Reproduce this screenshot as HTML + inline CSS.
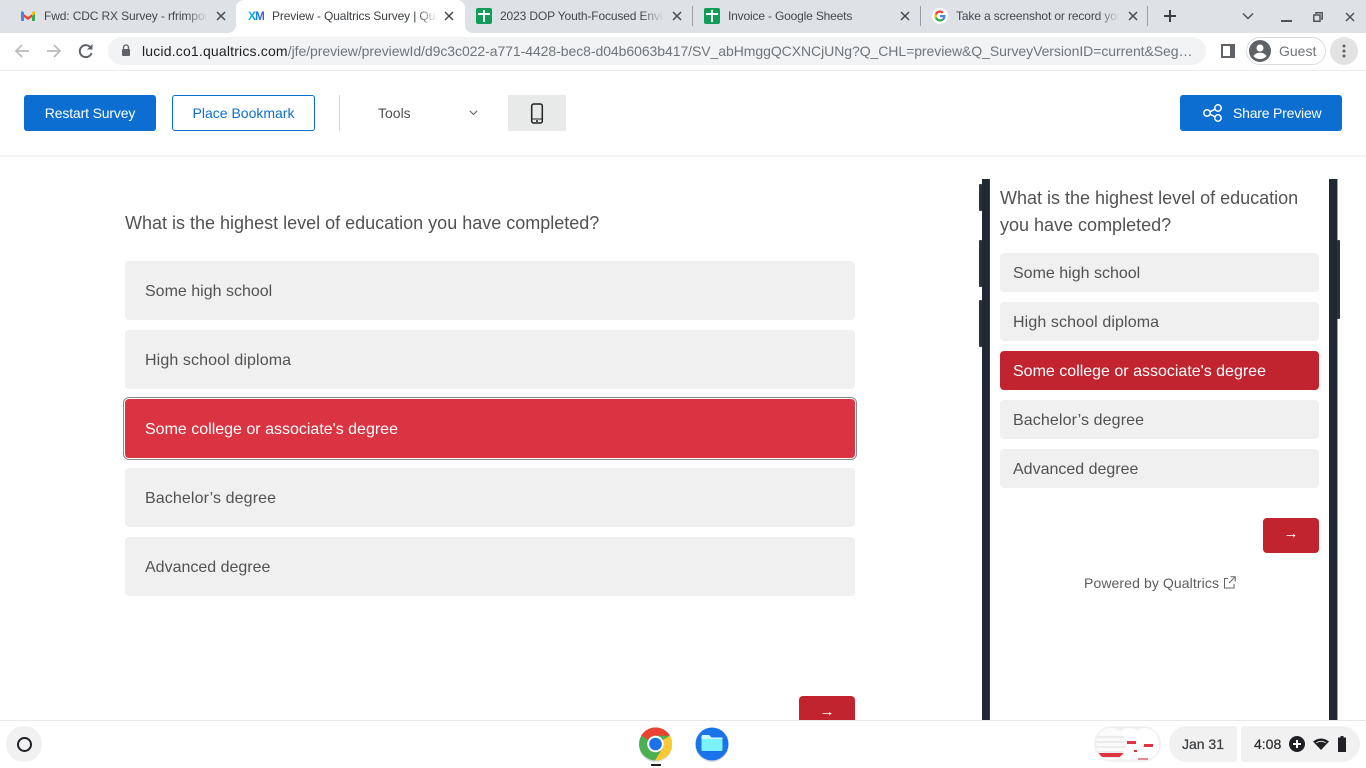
<!DOCTYPE html>
<html><head><meta charset="utf-8"><style>
html,body{margin:0;padding:0}
body{width:1366px;height:768px;overflow:hidden;background:#fff;position:relative;font-family:"Liberation Sans",sans-serif;color:#525252}
div,span,svg{position:absolute;box-sizing:border-box}
.t{white-space:nowrap;overflow:hidden;font-size:12px;line-height:16px;color:#45484c;top:8px;letter-spacing:-.13px}
.fade{top:4px;height:24px;width:22px;background:linear-gradient(90deg,rgba(222,225,230,0),#dee1e6)}
.sep{width:1px;height:20px;top:6px;background:#9a9ea3}
.o{left:125px;width:730px;height:59px;background:#f0f0f0;border-radius:4px;font-size:16px;line-height:61px;padding-left:20px;color:#525252}
.m{left:1000px;width:319px;height:39px;background:#f0f0f0;border-radius:4px;font-size:16px;line-height:41px;padding-left:13px;color:#525252}
.ls{letter-spacing:.11px}
.btn{top:95px;height:36px;border-radius:3px;font-size:14px;line-height:36px;text-align:center}
.fb{background:#2b3139;width:3px;border-radius:1px}
.arr{width:56px;height:35px;background:#c1232f;border-radius:4px;color:#fff;font-size:15px;line-height:32px;text-align:center}
</style></head><body>

<!-- tab strip -->
<div style="left:0;top:0;width:1366px;height:33px;background:#dee1e6"></div>
<div style="left:236px;top:0;width:229px;height:33px;background:#fff;border-radius:8px 8px 0 0"></div>
<div style="left:228px;top:25px;width:8px;height:8px;background:#fff"></div>
<div style="left:228px;top:25px;width:8px;height:8px;background:#dee1e6;border-radius:0 0 8px 0"></div>
<div style="left:465px;top:25px;width:8px;height:8px;background:#fff"></div>
<div style="left:465px;top:25px;width:8px;height:8px;background:#dee1e6;border-radius:0 0 0 8px"></div>

<!-- gmail -->
<svg style="left:21px;top:11px" width="14" height="10" viewBox="0 0 14 10"><path d="M0 1 7 6l7-5v3L7 9 0 4z" fill="#ea4335"/><path d="M0 1.500Q0 0 1.500.3L3 1.500V10H1q-1 0-1-1z" fill="#4285f4"/><path d="M14 1.500V9q0 1-1 1h-2V4z" fill="#34a853"/><path d="M11 1.500 12.500.3Q14 0 14 1.500V2.800L11 5z" fill="#fbbc04"/></svg>
<div class="t" style="left:44px;width:163px">Fwd: CDC RX Survey - rfrimpong</div><div class="fade" style="left:186px"></div>
<svg style="left:216px;top:11px" width="10" height="10" viewBox="0 0 10 10"><path d="M1 1l8 8M9 1l-8 8" stroke="#45484c" stroke-width="1.500"/></svg>

<!-- XM -->
<div style="left:248px;top:9px;font-size:12px;font-weight:bold;line-height:14px;letter-spacing:-1px;color:transparent;background:linear-gradient(90deg,#12c4dc,#0b7ee0 60%,#5a4be0);-webkit-background-clip:text;background-clip:text">XM</div>
<div class="t" style="left:272px;width:164px;color:#3c4043">Preview - Qualtrics Survey | Qualtrics</div>
<div class="fade" style="left:416px;background:linear-gradient(90deg,rgba(255,255,255,0),#fff)"></div>
<svg style="left:444px;top:11px" width="10" height="10" viewBox="0 0 10 10"><path d="M1 1l8 8M9 1l-8 8" stroke="#45484c" stroke-width="1.500"/></svg>

<!-- sheets 1 -->
<div style="left:476px;top:8px;width:16px;height:16px;background:#0f9d58;border-radius:2px"></div>
<div style="left:478px;top:13px;width:12px;height:2px;background:#fff"></div><div style="left:483px;top:10px;width:2px;height:12px;background:#fff"></div>
<div class="t" style="left:500px;width:164px">2023 DOP Youth-Focused Environment</div><div class="fade" style="left:642px"></div>
<svg style="left:672px;top:11px" width="10" height="10" viewBox="0 0 10 10"><path d="M1 1l8 8M9 1l-8 8" stroke="#45484c" stroke-width="1.500"/></svg>
<div class="sep" style="left:692px"></div>

<!-- sheets 2 -->
<div style="left:704px;top:8px;width:16px;height:16px;background:#0f9d58;border-radius:2px"></div>
<div style="left:706px;top:13px;width:12px;height:2px;background:#fff"></div><div style="left:711px;top:10px;width:2px;height:12px;background:#fff"></div>
<div class="t" style="left:728px;width:170px;letter-spacing:-.17px">Invoice - Google Sheets</div>
<svg style="left:900px;top:11px" width="10" height="10" viewBox="0 0 10 10"><path d="M1 1l8 8M9 1l-8 8" stroke="#45484c" stroke-width="1.500"/></svg>
<div class="sep" style="left:920px"></div>

<!-- google -->
<div style="left:932px;top:8px;width:16px;height:16px;background:#fff;border-radius:50%"></div>
<svg style="left:934px;top:10px" width="12" height="12" viewBox="0 0 24 24"><path d="M23 12.300c0-.9-.1-1.600-.2-2.300H12v4.400h6.200c-.3 1.400-1 2.500-2.200 3.300l3.600 2.800c2.100-2 3.400-4.900 3.400-8.200z" fill="#4285f4"/><path d="M12 23c3 0 5.500-1 7.600-2.700L16 17.500c-1 .7-2.300 1.100-4 1.100-3 0-5.500-2-6.400-4.700L1.900 16.700C3.700 20.500 7.500 23 12 23z" fill="#34a853"/><path d="M5.600 14c-.5-1.400-.5-2.700 0-4L1.900 7.200C.4 10.100.4 13.800 1.900 16.700z" fill="#fbbc05"/><path d="M12 5.400c1.700 0 3.200.6 4.300 1.700l3.200-3.200C17.500 2.100 15 1 12 1 7.500 1 3.700 3.500 1.900 7.200L5.600 10C6.500 7.300 9 5.400 12 5.400z" fill="#ea4335"/></svg>
<div class="t" style="left:956px;width:164px">Take a screenshot or record your</div><div class="fade" style="left:1098px"></div>
<svg style="left:1128px;top:11px" width="10" height="10" viewBox="0 0 10 10"><path d="M1 1l8 8M9 1l-8 8" stroke="#45484c" stroke-width="1.500"/></svg>
<div class="sep" style="left:1147px"></div>

<svg style="left:1163px;top:9px" width="14" height="14" viewBox="0 0 14 14"><path d="M7 1v12M1 7h12" stroke="#3c4043" stroke-width="2"/></svg>
<svg style="left:1242px;top:12px" width="12" height="8" viewBox="0 0 12 8"><path d="M1 1.500l5 5 5-5" fill="none" stroke="#50545a" stroke-width="1.500"/></svg>
<div style="left:1281px;top:20px;width:11px;height:2px;background:#50545a"></div>
<svg style="left:1313px;top:12px" width="10" height="10" viewBox="0 0 10 10"><path d="M3 2V.8h6.200V7H8M.8 3h6.200v6.200H.8z" fill="none" stroke="#50545a" stroke-width="1.500"/></svg>
<svg style="left:1345px;top:12px" width="10" height="10" viewBox="0 0 10 10"><path d="M1 1l8 8M9 1l-8 8" stroke="#50545a" stroke-width="1.500"/></svg>

<!-- toolbar -->
<svg style="left:14px;top:43px" width="16" height="16" viewBox="0 0 16 16"><path d="M15 8H2M8 2 2 8l6 6" fill="none" stroke="#b9bbbe" stroke-width="1.700"/></svg>
<svg style="left:46px;top:43px" width="16" height="16" viewBox="0 0 16 16"><path d="M1 8h13M8 2l6 6-6 6" fill="none" stroke="#b9bbbe" stroke-width="1.700"/></svg>
<svg style="left:78px;top:43px" width="16" height="16" viewBox="0 0 16 16"><path d="M13.500 10a6 6 0 1 1-.6-5" fill="none" stroke="#5f6368" stroke-width="2"/><path d="M14.500 1v5.500H9z" fill="#5f6368"/></svg>
<div style="left:108px;top:37px;width:1098px;height:28px;background:#f1f3f4;border-radius:14px"></div>
<svg style="left:121px;top:44px" width="10" height="13" viewBox="0 0 10 13"><path d="M2.500 5V3.500a2.500 2.500 0 0 1 5 0V5" fill="none" stroke="#5f6368" stroke-width="1.300"/><rect x="1" y="5" width="8" height="7" rx="1" fill="#5f6368"/></svg>
<div style="left:142px;top:42px;width:1052px;height:18px;overflow:hidden;white-space:nowrap;font-size:14px;line-height:18px;color:#70757a;letter-spacing:-.06px"><span style="position:static;color:#202124;letter-spacing:.18px">lucid.co1.qualtrics.com</span>/jfe/preview/previewId/d9c3c022-a771-4428-bec8-d04b6063b417/SV_abHmggQCXNCjUNg?Q_CHL=preview&amp;Q_SurveyVersionID=current&amp;Seg…</div>

<svg style="left:1221px;top:44px" width="14" height="14" viewBox="0 0 14 14"><path d="M0 0h14v14H0z" fill="#5f6368"/><path d="M2 2h7v10H2z" fill="#fff"/></svg>
<div style="left:1246px;top:37px;width:80px;height:28px;border:1px solid #dadce0;border-radius:14px"></div>
<svg style="left:1249px;top:40px" width="22" height="22" viewBox="0 0 22 22"><circle cx="11" cy="11" r="11" fill="#5f6368"/><circle cx="11" cy="8" r="3.500" fill="#fff"/><path d="M4.500 16c1.500-2.500 4-3.300 6.500-3.300s5 .8 6.500 3.300c-1.500 2-4 3-6.500 3s-5-1-6.500-3z" fill="#fff"/></svg>
<div style="left:1279px;top:43px;font-size:14px;line-height:16px;color:#70757a">Guest</div>
<div style="left:1330px;top:37px;width:28px;height:28px;background:#e3e3e3;border-radius:50%"></div>
<svg style="left:1342px;top:44px" width="4" height="14" viewBox="0 0 4 14"><circle cx="2" cy="2" r="1.500" fill="#5f6368"/><circle cx="2" cy="7" r="1.500" fill="#5f6368"/><circle cx="2" cy="12" r="1.500" fill="#5f6368"/></svg>
<div style="left:0;top:70px;width:1366px;height:1px;background:#eceded"></div>

<!-- preview header -->
<div class="btn" style="left:24px;width:132px;background:#0b6ed0;color:#fff;letter-spacing:-.15px">Restart Survey</div>
<div class="btn" style="left:172px;width:143px;border:1px solid #0b6ed0;color:#0b6ed0;line-height:34px;background:#fff">Place Bookmark</div>
<div style="left:339px;top:95px;width:1px;height:36px;background:#d4d6d6"></div>
<div style="left:378px;top:105px;font-size:14px;line-height:16px;color:#525252">Tools</div>
<svg style="left:469px;top:110px" width="9" height="6" viewBox="0 0 9 6"><path d="M.8.8 4.500 4.500 8.200.8" fill="none" stroke="#666" stroke-width="1.100"/></svg>
<div style="left:508px;top:95px;width:58px;height:36px;background:#e8e9e9"></div>
<svg style="left:530px;top:103px" width="14" height="21" viewBox="0 0 14 21"><rect x="1.700" y="1" width="10.600" height="19" rx="2" fill="none" stroke="#222" stroke-width="1.500"/><path d="M2 16h10" stroke="#222" stroke-width="1"/><rect x="6" y="17.200" width="2" height="1.600" fill="#222"/></svg>
<div class="btn" style="left:1180px;width:162px;background:#0b6ed0"></div>
<div style="left:1233px;top:105px;font-size:14px;line-height:16px;color:#fff;white-space:nowrap;letter-spacing:-.2px">Share Preview</div>
<svg style="left:1202px;top:104px" width="22" height="18" viewBox="0 0 22 18"><g fill="none" stroke="#fff" stroke-width="1.500"><circle cx="5" cy="9" r="3.200"/><circle cx="16" cy="4" r="3.200"/><circle cx="16" cy="14" r="3.200"/><path d="M8 7.700l5-2.400M8 10.300l5 2.400"/></g></svg>
<div style="left:0;top:155px;width:1366px;height:2px;background:#f3f4f4"></div>

<!-- desktop survey -->
<div style="left:125px;top:211px;font-size:18px;line-height:24px;color:#525252;white-space:nowrap">What is the highest level of education you have completed?</div>
<div class="o" style="top:261px">Some high school</div>
<div class="o ls" style="top:330px">High school diploma</div>
<div style="left:123px;top:397px;width:734px;height:63px;border:1px solid #8a8a8a;border-radius:6px;background:#fff"></div>
<div class="o" style="top:399px;background:#da3341;color:#fff">Some college or associate's degree</div>
<div class="o ls" style="top:468px">Bachelor’s degree</div>
<div class="o" style="top:537px">Advanced degree</div>
<div class="arr" style="left:799px;top:696px">→</div>

<!-- phone frame -->
<div style="left:982px;top:179px;width:8px;height:541px;background:#1f2933;border-right:1px solid #333b44"></div>
<div class="fb" style="left:979px;top:184px;height:27px"></div>
<div class="fb" style="left:979px;top:240px;height:47px"></div>
<div class="fb" style="left:979px;top:300px;height:47px"></div>
<div style="left:1329px;top:179px;width:9px;height:541px;background:#1f2933;border-right:1px solid #9aa0a5"></div>
<div class="fb" style="left:1337px;top:240px;height:79px"></div>

<div style="left:1000px;top:185px;width:319px;font-size:18px;line-height:27px;color:#525252">What is the highest level of education<br>you have completed?</div>
<div class="m" style="top:253px">Some high school</div>
<div class="m ls" style="top:302px">High school diploma</div>
<div class="m" style="top:351px;background:#c1232f;color:#fff">Some college or associate's degree</div>
<div class="m ls" style="top:400px">Bachelor’s degree</div>
<div class="m" style="top:449px">Advanced degree</div>
<div class="arr" style="left:1263px;top:518px">→</div>
<div style="left:1084px;top:575px;font-size:14px;line-height:16px;color:#5c5c5c;white-space:nowrap;letter-spacing:.1px">Powered by Qualtrics</div>
<svg style="left:1223px;top:576px" width="13" height="13" viewBox="0 0 13 13"><path d="M5 2.500H1.500v9.500h9.500V8M7.500.8h4.700v4.700M12 1 6 7" fill="none" stroke="#666" stroke-width="1"/></svg>

<!-- shelf -->
<div style="left:0;top:720px;width:1366px;height:48px;background:#fff;border-top:1px solid #e8e8e8"></div>
<div style="left:6px;top:726px;width:36px;height:36px;background:#f1f1f1;border-radius:50%"></div>
<div style="left:17px;top:737px;width:15px;height:15px;border:2.500px solid #202124;border-radius:50%"></div>

<!-- chrome -->
<svg style="left:637px;top:725px" width="38" height="40" viewBox="0 0 38 40"><ellipse cx="18.500" cy="20.500" rx="16.500" ry="16.500" fill="#c8c8c8" opacity=".6"/><circle cx="18.500" cy="19" r="16.500" fill="#4caf50"/><path d="M18.500 2.500A16.500 16.500 0 0 1 33 10.800H18.500a8.300 8.300 0 0 0-7.200 4.200L4.200 10.500A16.500 16.500 0 0 1 18.500 2.500z" fill="#ea4335"/><path d="M33 10.800A16.500 16.500 0 0 1 18 35.500L25.600 23.300a8.300 8.300 0 0 0 0-8.300z" fill="#fcc934"/><circle cx="18.500" cy="19" r="8.300" fill="#fff"/><circle cx="18.500" cy="19" r="6.300" fill="#1a73e8"/></svg>
<div style="left:651px;top:764px;width:10px;height:2px;background:#202124"></div>
<!-- files -->
<svg style="left:694px;top:726px" width="36" height="38" viewBox="0 0 36 38"><circle cx="18" cy="19.500" r="16.500" fill="#c8c8c8" opacity=".6"/><circle cx="18" cy="18" r="16.500" fill="#1a73e8"/><path d="M7.500 10.500q0-1.500 1.500-1.500h6l2.500 2.500h9.500q1.500 0 1.500 1.500v10.500q0 1.500-1.500 1.500H9q-1.500 0-1.500-1.500z" fill="#7cf2fb"/><path d="M7.500 10.500q0-1.500 1.500-1.500h6l2.500 2.500h11V13H7.500z" fill="#c9fafd"/></svg>

<!-- tray -->
<div style="left:1094px;top:726px;width:67px;height:36px;background:#f1f1f1;border-radius:18px"></div>
<div style="left:1130px;top:728px;width:29px;height:32px;background:#fff;border-radius:50%"></div>
<div style="left:1143px;top:744px;width:10px;height:3px;background:#de3443"></div>
<div style="left:1138px;top:758px;width:10px;height:2px;background:#e98b93"></div>
<div style="left:1114px;top:728px;width:30px;height:32px;background:#fff;border-radius:50%"></div>
<div style="left:1127px;top:741px;width:9px;height:3px;background:#de3443"></div>
<div style="left:1134px;top:750px;width:3px;height:2px;background:#de3443"></div>
<div style="left:1096px;top:728px;width:30px;height:32px;border-radius:50%;overflow:hidden;background:repeating-linear-gradient(180deg,#fafafa 0,#fafafa 3px,#ececec 3px,#ececec 5px)">
<div style="left:0;top:25px;width:30px;height:4px;background:#de3443"></div>
<div style="left:0;top:0;width:30px;height:7px;background:#fcfcfc"></div>
</div>
<div style="left:1169px;top:726px;width:68px;height:36px;background:#f1f1f1;border-radius:18px 3px 3px 18px;font-size:14px;-webkit-text-stroke:.25px #3c4043;line-height:36px;text-align:center;color:#3c4043">Jan 31</div>
<div style="left:1241px;top:726px;width:119px;height:36px;background:#f1f1f1;border-radius:3px 18px 18px 3px"></div>
<div style="left:1254px;top:736px;font-size:14px;line-height:16px;color:#2f3033;-webkit-text-stroke:.25px #2f3033">4:08</div>
<svg style="left:1289px;top:736px" width="16" height="16" viewBox="0 0 16 16"><circle cx="8" cy="8" r="8" fill="#202124"/><path d="M8 4v8M4 8h8" stroke="#fff" stroke-width="2"/></svg>
<svg style="left:1313px;top:738px" width="16" height="12" viewBox="0 0 16 12"><path d="M0 3.500Q8-2.500 16 3.500L8 12z" fill="#202124"/><path d="M3.300 4.800Q8 1.800 12.700 4.800" stroke="#f1f1f1" stroke-width=".8" fill="none"/></svg>
<svg style="left:1337px;top:736px" width="10" height="16" viewBox="0 0 10 16"><path d="M3.500 0h3v1.500H9V16H1V1.500h2.500z" fill="#202124"/></svg>

</body></html>
